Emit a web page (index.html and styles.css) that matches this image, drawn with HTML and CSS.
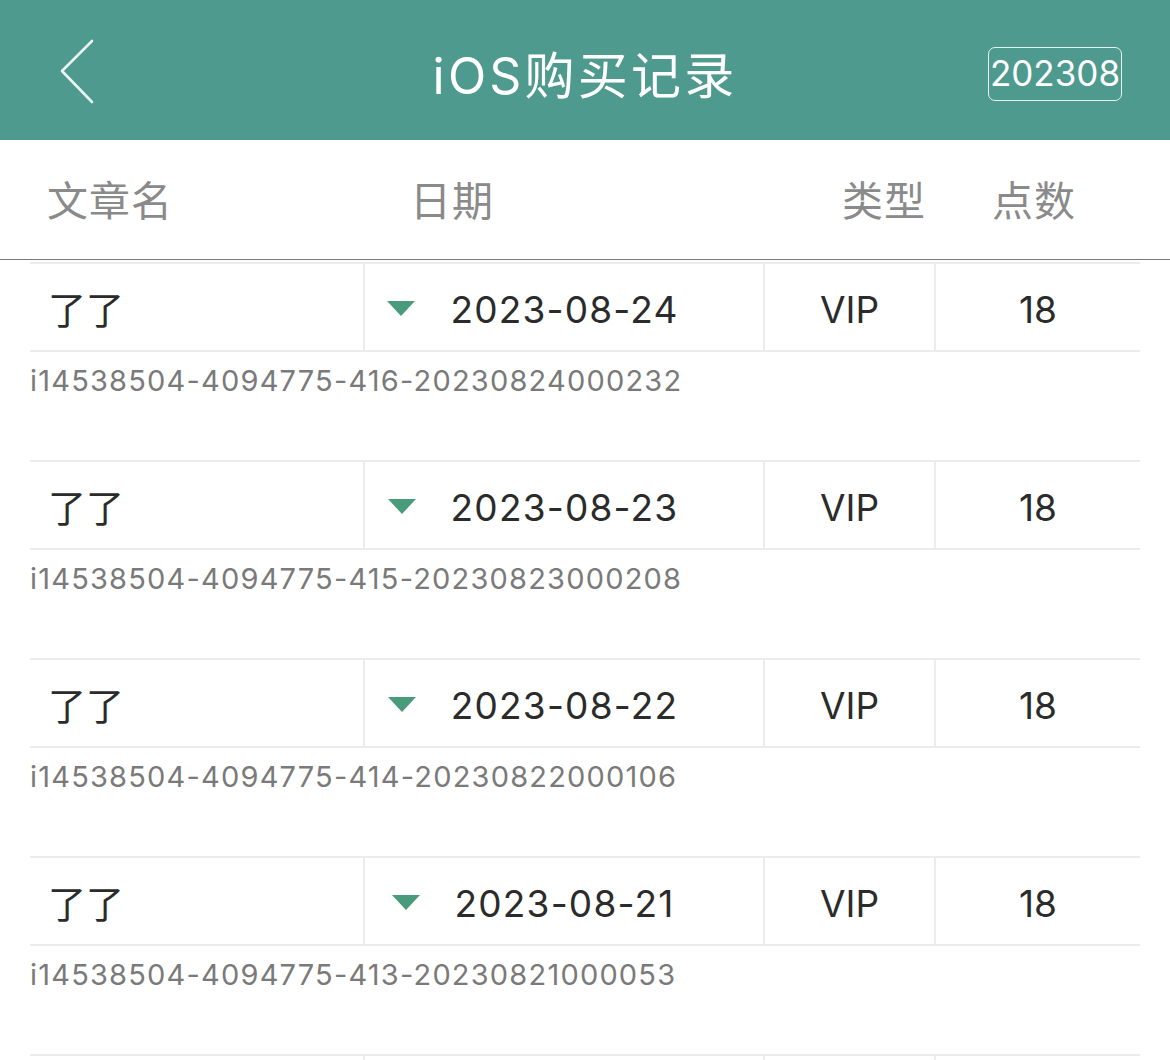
FILE: index.html
```html
<!DOCTYPE html>
<html>

<head>
    <meta charset="utf-8">
    <link rel="stylesheet" href="styles.css">
</head>

<body>
    <div class="navBar">
        <div class="backButton">
            <svg width="40" height="66" viewBox="0 0 40 66">
                <polyline points="33,2 3,32 33,63" fill="none" stroke="#eaf6f3" stroke-width="2.6" stroke-linecap="round" stroke-linejoin="round" />
            </svg>
        </div>
        <div class="navTitle">iOS购买记录</div>
        <div class="monthBox">202308</div>
    </div>

    <div class="headerRow">
        <div class="headerCell">文章名</div>
        <div class="headerCell">日期</div>
        <div class="headerCell">类型</div>
        <div class="headerCell">点数</div>
    </div>

    <div class="recordList">
        <div class="record">
            <div class="recordCells">
                <div class="cell nameCell">了了</div>
                <div class="cell dateCell"><span class="triangle"></span><span>2023-08-24</span></div>
                <div class="cell">VIP</div>
                <div class="cell">18</div>
            </div>
            <div class="orderId">i14538504-4094775-416-20230824000232</div>
        </div>
        <div class="record">
            <div class="recordCells">
                <div class="cell nameCell">了了</div>
                <div class="cell dateCell"><span class="triangle"></span><span>2023-08-23</span></div>
                <div class="cell">VIP</div>
                <div class="cell">18</div>
            </div>
            <div class="orderId">i14538504-4094775-415-20230823000208</div>
        </div>
        <div class="record">
            <div class="recordCells">
                <div class="cell nameCell">了了</div>
                <div class="cell dateCell"><span class="triangle"></span><span>2023-08-22</span></div>
                <div class="cell">VIP</div>
                <div class="cell">18</div>
            </div>
            <div class="orderId">i14538504-4094775-414-20230822000106</div>
        </div>
        <div class="record">
            <div class="recordCells">
                <div class="cell nameCell">了了</div>
                <div class="cell dateCell"><span class="triangle"></span><span>2023-08-21</span></div>
                <div class="cell">VIP</div>
                <div class="cell">18</div>
            </div>
            <div class="orderId">i14538504-4094775-413-20230821000053</div>
        </div>
        <!-- the next record only shows its top edge -->
        <div class="record">
            <div class="recordCells">
                <div class="cell nameCell"></div>
                <div class="cell dateCell"></div>
                <div class="cell"></div>
                <div class="cell"></div>
            </div>
        </div>
    </div>
</body>

</html>
```

FILE: styles.css
```css
* {
    box-sizing: border-box;
    font-family: Inter, "Noto Sans CJK SC", sans-serif;
}

body {
    margin: 0;
    background-color: white;
    overflow: hidden;
}

.navBar {
    height: 140px;
    background-color: #4e9a8e;
    display: grid;
    grid-template-columns: 200px 1fr 200px;
    align-items: center;
}

.backButton {
    padding-left: 59px;
    padding-top: 4px;
    display: flex;
}

.navTitle {
    color: white;
    font-size: 50px;
    letter-spacing: 3.2px;
    text-align: center;
    padding-top: 4px;
}

.monthBox {
    justify-self: end;
    margin-right: 48px;
    margin-top: 8px;
    height: 54px;
    width: 134px;
    border: 1.5px solid #e4f3ef;
    border-radius: 7px;
    color: white;
    font-size: 35px;
    line-height: 50px;
    text-align: center;
}

.headerRow {
    height: 120px;
    border-bottom: 1px solid #7a7a7a;
    display: grid;
    grid-template-columns: 363px 432px 150px 1fr;
    align-items: center;
    padding-left: 47px;
}

.headerCell {
    color: #8a8a8a;
    font-size: 41px;
    letter-spacing: 1px;
    padding-bottom: 4px;
}

.recordList {
    padding-top: 2px;
}

.record {
    margin: 0 30px;
    height: 198px;
}

.recordCells {
    display: grid;
    grid-template-columns: 333px 400px 171px 1fr;
    height: 90px;
    border-top: 2px solid #ececec;
    border-bottom: 2px solid #ececec;
}

.cell {
    display: flex;
    align-items: center;
    justify-content: center;
    font-size: 37px;
    color: #2b2b2b;
    border-left: 2px solid #ececec;
    padding-top: 4px;
}

.nameCell {
    border-left: none;
    justify-content: flex-start;
    padding-left: 18px;
    padding-top: 0;
    font-size: 38px;
}

.dateCell {
    padding-right: 62px;
    letter-spacing: 1.2px;
}

.triangle {
    width: 0;
    height: 0;
    border-left: 14px solid transparent;
    border-right: 14px solid transparent;
    border-top: 15px solid #4a9a7c;
    margin-right: 35px;
    margin-top: -2px;
}

.orderId {
    color: #7a7a7a;
    font-size: 29px;
    letter-spacing: 1.2px;
    padding-top: 11px;
}
```
